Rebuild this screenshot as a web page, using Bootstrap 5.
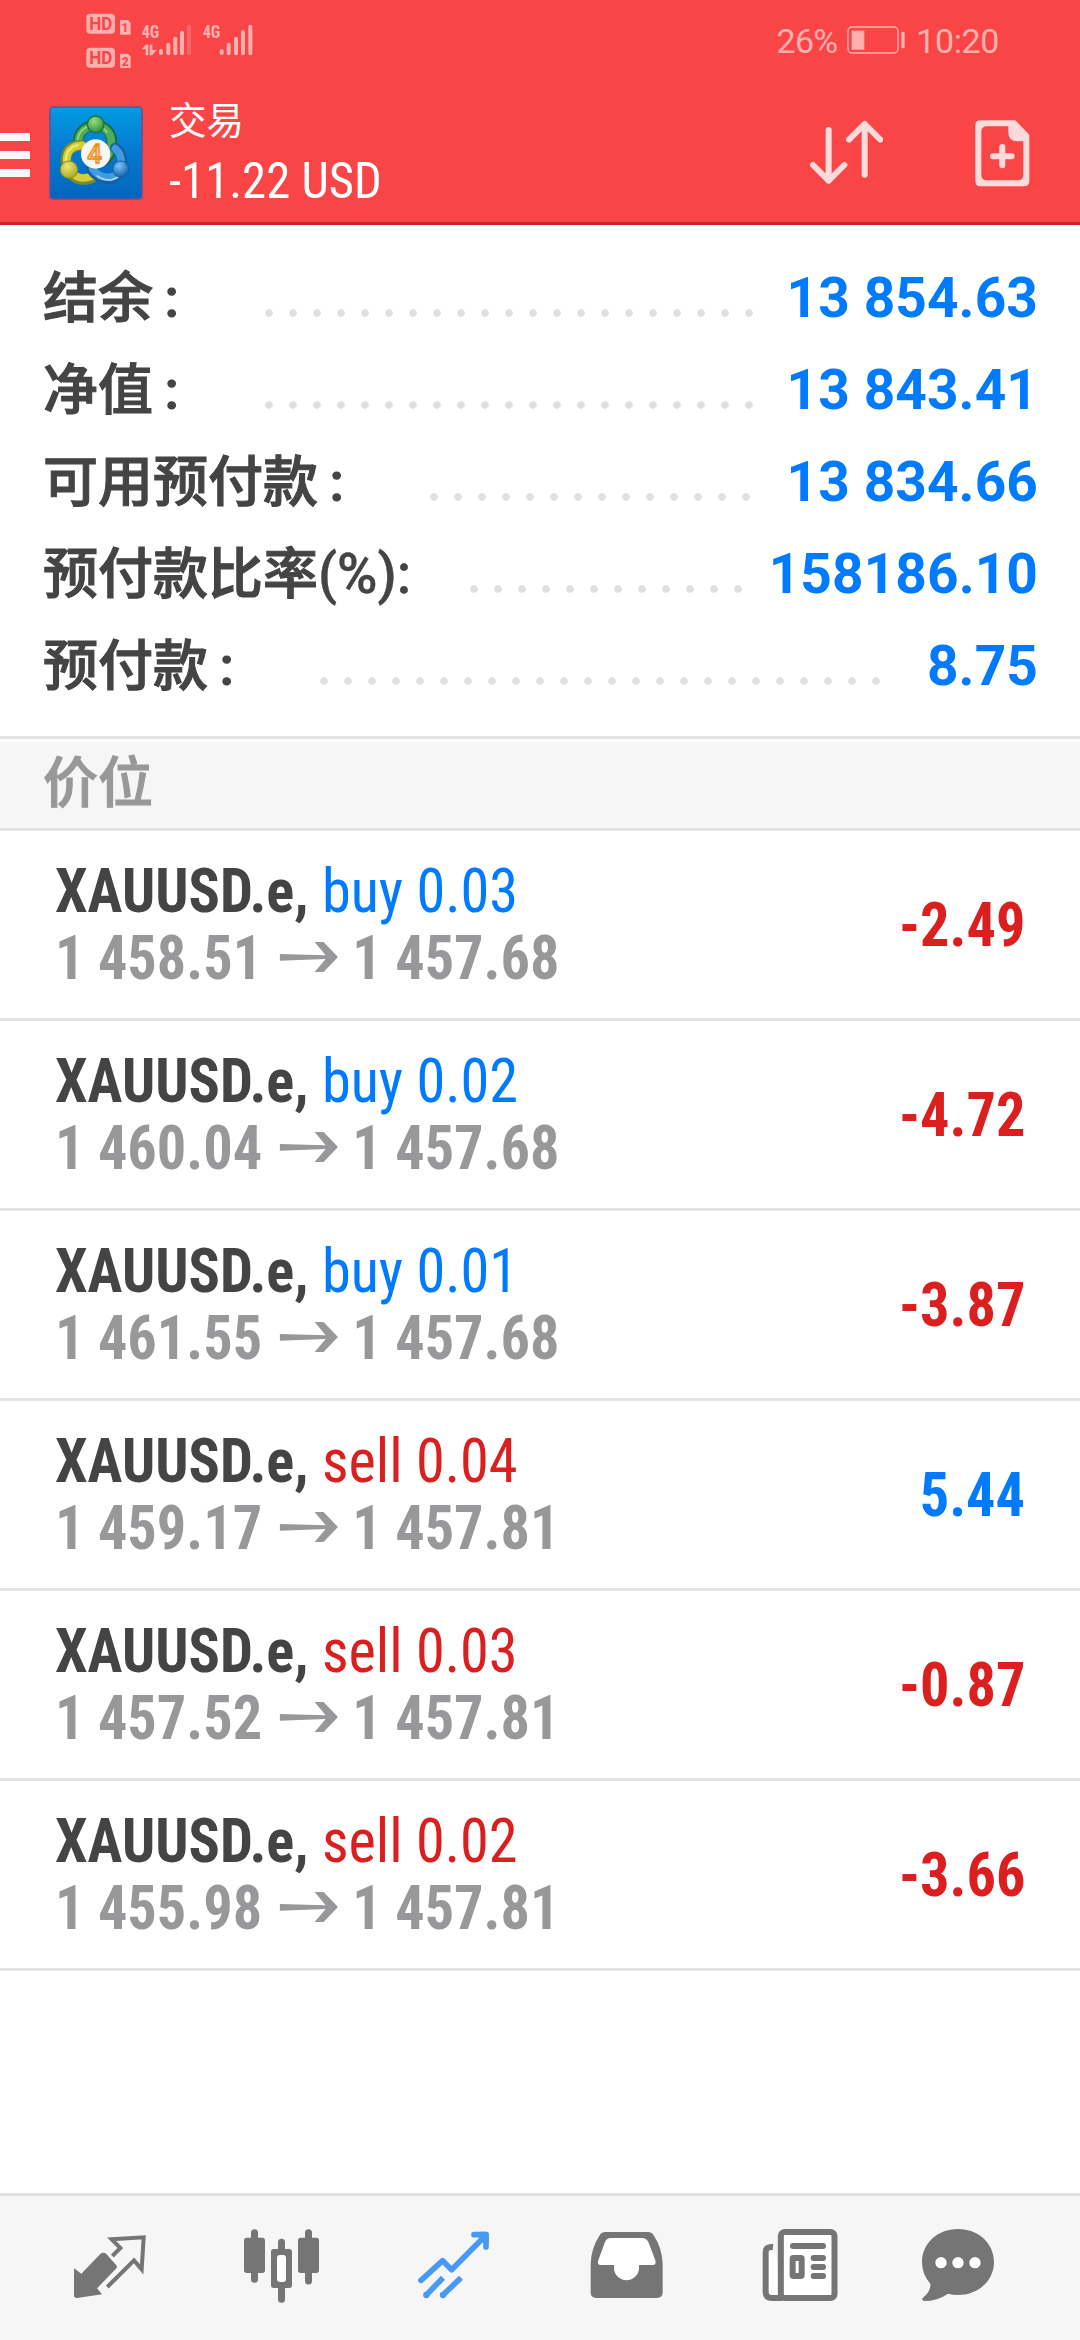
<!DOCTYPE html>
<html lang="zh-CN">
<head>
<meta charset="utf-8">
<meta name="viewport" content="width=device-width, initial-scale=1">
<title>交易</title>
<link href="https://cdn.jsdelivr.net/npm/bootstrap@5.3.0/dist/css/bootstrap.min.css" rel="stylesheet">
<style>
  :root { --up:#007aff; --down:#db1f1f; --ink:#444; --muted:#98989b; --rule:#e3e3e4; }
  body { font-family:Roboto,"Noto Sans CJK SC",sans-serif; height:2340px; background:#fff; overflow:hidden; }
  svg { display:block; flex:none; }
  .cond { font-family:"Roboto Condensed","Noto Sans CJK SC",sans-serif; white-space:pre; }
  .app-head { background:#fa4547; height:225px; border-bottom:3px solid #c72329; color:#fff; }
  .status { height:80px; color:#fdb0ae; font-size:34px; line-height:40px; padding:21px 81px 0 84px; }
  .status .clock { letter-spacing:-.4px; }
  .titles { margin-left:26px; padding-top:15px; }
  .app-title { font-family:"Noto Sans CJK SC",sans-serif; font-size:37.5px; line-height:46px; font-weight:400; }
  .app-total { font-size:50px; line-height:60px; margin-top:10px; transform:scaleX(.975); transform-origin:left; }
  .summary { height:511px; padding:27px 42px 0 43px; }
  .sum-row { height:92px; font-size:55px; line-height:92px; color:var(--ink); }
  .sum-label { width:var(--start); font-family:"Noto Sans CJK SC",sans-serif; font-weight:500; white-space:nowrap; line-height:82px; -webkit-text-stroke:1.1px currentColor; }
  .sum-label .pct { font-family:Roboto,sans-serif; font-weight:500; -webkit-text-stroke:.4px currentColor; }
  .sum-label .cln { font-family:Roboto,sans-serif; font-weight:700; margin-left:11px; -webkit-text-stroke:0; }
  .leader { width:calc(var(--n)*24px); height:8px; margin-top:57px; background:radial-gradient(circle at 12px 4px,#e0e0e0 3.4px,transparent 4.2px) 0 0/24px 8px repeat-x; }
  .sum-val { font-weight:700; color:var(--up); letter-spacing:.1px; }
  .sect { height:95px; border-top:3px solid var(--rule); border-bottom:3px solid var(--rule); padding-top:3px; }
  .sect div { background:#f6f6f6; height:86px; padding-left:43px; font:500 55px/73px "Noto Sans CJK SC",sans-serif; color:var(--muted); -webkit-text-stroke:1.1px currentColor; }
  .deal { height:190px; border-bottom:3px solid var(--rule); font-size:62px; line-height:67px; padding:0 55px 0 55px; }
  .deal-main { padding-top:26px; transform:scaleX(.94); transform-origin:left; }
  .sym { font-weight:700; color:var(--ink); }
  .prices { font-weight:700; color:var(--muted); }
  .prices svg { margin:18px 15px 0 19px; }
  .up { color:var(--up); } .down { color:var(--down); }
  .pnl { font-weight:700; padding-top:60px; transform:scaleX(.94); transform-origin:right; }
  .tabs { height:147px; background:#f6f6f6; border-top:3px solid #e2e2e3; padding:20px 24px 0; color:#757575; }
  .tabs a { width:172px; color:inherit; }
  .tabs a.on { color:#4799f5; }
</style>
</head>
<body class="d-flex flex-column">
<header class="app-head">
  <div class="status d-flex justify-content-between">
    <svg width="176" height="59" viewBox="252 36 528 177" style="margin-top:-9px" fill="#fdb0ae">
      <rect x="259" y="41" width="86" height="60" rx="12"/><rect x="259" y="143" width="86" height="60" rx="12"/>
      <g font-family="Roboto" font-weight="700" font-size="54" fill="#fa4547"><text x="268" y="91" textLength="69" lengthAdjust="spacingAndGlyphs">HD</text><text x="268" y="193" textLength="69" lengthAdjust="spacingAndGlyphs">HD</text></g>
      <path d="M360 60h24l8 9v35h-32zM360 161h24l8 9v34h-32z"/>
      <g font-family="Roboto" font-weight="700" font-size="38" fill="#fa4547"><text x="364" y="97" textLength="22" lengthAdjust="spacingAndGlyphs">1</text><text x="365" y="197" textLength="21" lengthAdjust="spacingAndGlyphs">2</text></g>
      <g font-family="Roboto Condensed" font-weight="700" font-size="54"><text x="425" y="114" textLength="53" lengthAdjust="spacingAndGlyphs">4G</text><text x="608" y="114" textLength="53" lengthAdjust="spacingAndGlyphs">4G</text></g>
      <path d="M437 134h8v32h-8v-18h-12zM449 134h8v16l13 0-13 16h-8z"/>
      <g stroke="#fdb0ae" stroke-width="12" stroke-linecap="round"><path d="M483 159v-6M505 160v-26M526 160v-44M546 160V98M665 159v-6M686 160v-26M708 160v-44M729 160V96M751 160V80"/><path d="M567 160V80" opacity=".3"/></g>
    </svg>
    <div class="d-flex">
      <span style="letter-spacing:-.8px">26%</span>
      <svg width="58" height="28" viewBox="0 0 174 84" style="margin:5px 11px 0 10px" fill="none" stroke="#fdb0ae"><rect x="3" y="3" width="150" height="78" rx="12" stroke-width="4"/><path d="M14 14h38v57H14z" fill="#fdb0ae" stroke="none"/><path d="M168 22v40" stroke-width="10" stroke-linecap="round"/></svg>
      <span class="clock">10:20</span>
    </div>
  </div>
  <div class="d-flex">
    <svg width="30" height="44" viewBox="0 0 30 44" style="margin-top:53px" fill="#f7f7fd"><path d="M0 0h30v8H0zM0 18h30v8H0zM0 36h30v8H0z"/></svg>
    <svg width="94" height="94" viewBox="147 318 282 282" style="margin:26px 0 0 19px">
      <defs>
        <linearGradient id="sky" x1="0" y1="0" x2="0" y2="1"><stop offset="0" stop-color="#029be2"/><stop offset=".5" stop-color="#0479cf"/><stop offset="1" stop-color="#0465bd"/></linearGradient>
        <radialGradient id="gn" cx=".4" cy=".3" r=".7"><stop offset="0" stop-color="#9fdc7d"/><stop offset="1" stop-color="#2c9443"/></radialGradient>
        <radialGradient id="yl" cx=".4" cy=".3" r=".7"><stop offset="0" stop-color="#eee777"/><stop offset="1" stop-color="#a9ab20"/></radialGradient>
        <radialGradient id="bl" cx=".4" cy=".3" r=".7"><stop offset="0" stop-color="#7cc6f5"/><stop offset="1" stop-color="#1365b3"/></radialGradient>
      </defs>
      <rect x="150" y="321" width="276" height="276" rx="10" fill="url(#sky)" stroke="#5b55a0" stroke-width="5"/>
      <g fill="none" stroke-linecap="round">
        <path d="M236 432c-8-70 98-78 100-6 0 24-8 44-20 54" stroke="#1c6e3c" stroke-width="32"/>
        <path d="M236 428c-4-60 94-72 98-4 0 24-6 40-16 50" stroke="#4fae57" stroke-width="23"/>
        <path d="M233 418c4-40 60-58 88-22" stroke="#9bd68a" stroke-width="5"/>
        <path d="M246 436c-50 0-54 40-42 70 14 32 44 38 70 28" stroke="#7d8a2a" stroke-width="32"/>
        <path d="M246 436c-48 2-52 40-40 68 14 30 42 34 66 26" stroke="#d6cd3b" stroke-width="23"/>
        <path d="M234 435c-34 8-40 36-34 58" stroke="#f5ef8e" stroke-width="5"/>
        <path d="M346 444c30 22 28 86-18 92-24 0-44-12-54-28" stroke="#1c5c9e" stroke-width="32"/>
        <path d="M346 446c26 20 26 80-18 86-24 0-40-10-50-26" stroke="#3f9ce0" stroke-width="23"/>
        <path d="M292 528c30 22 68 12 80-22" stroke="#a2d7f8" stroke-width="5"/>
      </g>
      <circle cx="287" cy="373" r="25" fill="url(#gn)" stroke="#1d7338" stroke-width="4"/>
      <circle cx="207" cy="509" r="26" fill="url(#yl)" stroke="#878b1e" stroke-width="3"/>
      <circle cx="362" cy="507" r="24" fill="url(#bl)" stroke="#175c9f" stroke-width="3"/>
      <circle cx="287" cy="462" r="44" fill="#f7f6f6"/>
      <text x="262" y="489" font-family="Roboto" font-size="78" font-weight="500" fill="#fbd27e" stroke="#e98d24" stroke-width="4">4</text>
    </svg>
    <div class="titles">
      <div class="app-title">交易</div>
      <div class="app-total cond">-11.22 USD</div>
    </div>
    <svg class="ms-auto" width="74" height="66" viewBox="205 360 222 198" style="margin:40px 92px 0 0" fill="none" stroke="#fedada" stroke-width="18" stroke-linecap="round" stroke-linejoin="round"><path d="M264 390v152M217 495l47 47 47-47M372 524V372M325 419l47-47 47 47"/></svg>
    <svg width="55" height="67" viewBox="704 359 165 201" style="margin:40px 50px 0 0" fill="#fedada"><path fill-rule="evenodd" d="M720 360h105l42 43v139q0 16-16 16H720q-15 0-15-16V376q0-16 15-16zM740 378q-17 0-17 17v128q0 17 17 17h92q17 0 17-17V423h-18q-27 0-27-27v-18z"/><path d="M786 440v55M758 468h56" stroke="#fedada" stroke-width="18" stroke-linecap="round"/></svg>
  </div>
</header>
<main class="flex-grow-1">
  <section class="summary">
    <div class="sum-row d-flex" style="--start:214px;--n:21"><div class="sum-label">结余<span class="cln">:</span></div><div class="leader"></div><div class="sum-val ms-auto">13 854.63</div></div>
    <div class="sum-row d-flex" style="--start:214px;--n:21"><div class="sum-label">净值<span class="cln">:</span></div><div class="leader"></div><div class="sum-val ms-auto">13 843.41</div></div>
    <div class="sum-row d-flex" style="--start:379px;--n:14"><div class="sum-label">可用预付款<span class="cln">:</span></div><div class="leader"></div><div class="sum-val ms-auto">13 834.66</div></div>
    <div class="sum-row d-flex" style="--start:419px;--n:12"><div class="sum-label">预付款比率<span class="pct">(%):</span></div><div class="leader"></div><div class="sum-val ms-auto">158186.10</div></div>
    <div class="sum-row d-flex" style="--start:269px;--n:24"><div class="sum-label">预付款<span class="cln">:</span></div><div class="leader"></div><div class="sum-val ms-auto">8.75</div></div>
  </section>
  <div class="sect"><div>价位</div></div>
  <section id="deals"></section>
</main>
<nav class="tabs d-flex">
  <a class="d-flex justify-content-center" href="#"><svg width="120" height="100" viewBox="-30 78 360 300" fill="currentColor"><path d="M130 188q-5 0-9 4L64 251l-22-16v80q0 10 10 9l74-11-15-18 57-59q5-5 1-10l-30-34q-4-4-9-4z"/><path d="M157 198l24-24-26-26 96-6-6 96-23-27-80 80" fill="none" stroke="currentColor" stroke-width="12"/></svg></a>
  <a class="d-flex justify-content-center" href="#"><svg width="120" height="100" viewBox="486 78 360 300" fill="currentColor"><rect x="552" y="143" width="63" height="106" rx="8"/><rect x="714" y="143" width="63" height="106" rx="8"/><rect x="633" y="177" width="63" height="117" rx="8"/><path d="M583.500 128v140M745.500 128v145M664.500 157v30M664.500 290v38" stroke="currentColor" stroke-width="21" stroke-linecap="round"/><rect x="651" y="195" width="27" height="81" rx="9" fill="#fff"/></svg></a>
  <a class="d-flex justify-content-center on" href="#"><svg width="120" height="100" viewBox="1002 78 360 300" fill="none" stroke="currentColor" stroke-width="17"><g stroke-linecap="round" stroke-linejoin="round"><path d="M1083 271l65-59 27 27 103-104M1242 134h36v37"/><path d="M1262 134h16v20z"/></g><path d="M1099 315l50-52M1149 315l54-52"/><g fill="currentColor" stroke="none"><circle cx="1099" cy="315" r="9.500"/><circle cx="1149" cy="315" r="9.500"/></g></svg></a>
  <a class="d-flex justify-content-center" href="#"><svg width="120" height="100" viewBox="-12 78 360 300"><path fill="currentColor" d="M106 126h128q11 0 17 10 25 38 27 85v86q0 17-17 17H79q-17 0-17-17v-86q2-47 27-85 6-10 17-10z"/><path fill="#fff" d="M123 144h92q14 0 20 12l21 55q4 14-8 14h-41v8a37 37 0 0 1-75 0v-8H92q-12 0-7-14l20-55q5-12 18-12z"/></svg></a>
  <a class="d-flex justify-content-center" href="#"><svg width="120" height="100" viewBox="504 78 360 300" fill="none" stroke="currentColor" stroke-width="18"><path d="M609 170q-22-2-22 16v118q0 20 20 20h40" fill="#fff" stroke="none"/><rect x="632.500" y="126" width="161" height="198" rx="12" fill="#fff"/><path d="M609 171q-22-2-22 16v118q0 19 20 19h30"/><path d="M669 168h90M731 204h28M731 231h28M731 258h28" stroke-linecap="round"/><rect x="668" y="204" width="27" height="54" rx="2" fill="#fff"/></svg></a>
  <a class="d-flex justify-content-center" href="#"><svg width="120" height="100" viewBox="1020 78 360 300" fill="currentColor"><path d="M1164 117c62 0 108 44 108 99s-46 99-108 99q-16 0-30-4-32 22-71 22-10-2-5-9 25-19 23-43-25-28-25-65c0-55 46-99 108-99z"/><g fill="#fff"><circle cx="1113" cy="218" r="17"/><circle cx="1164" cy="218" r="17"/><circle cx="1215" cy="218" r="17"/></g></svg></a>
</nav>
<script src="https://cdn.jsdelivr.net/npm/bootstrap@5.3.0/dist/js/bootstrap.bundle.min.js"></script>
<script>
  const deals = [
    ["buy 0.03", "1 458.51", "1 457.68", "-2.49"],
    ["buy 0.02", "1 460.04", "1 457.68", "-4.72"],
    ["buy 0.01", "1 461.55", "1 457.68", "-3.87"],
    ["sell 0.04", "1 459.17", "1 457.81", "5.44"],
    ["sell 0.03", "1 457.52", "1 457.81", "-0.87"],
    ["sell 0.02", "1 455.98", "1 457.81", "-3.66"]
  ];
  document.getElementById("deals").innerHTML = deals.map(([side, open, now, pnl]) => `
    <div class="deal cond d-flex justify-content-between"><div class="deal-main"><div class="d-flex"><span class="sym">XAUUSD.e, </span><span class="side ${side[0] === "b" ? "up" : "down"}">${side}</span></div><div class="prices d-flex"><span>${open}</span><svg width="62" height="30" viewBox="0 0 175 90" preserveAspectRatio="none" fill="currentColor"><path d="M0 36L138 40 105 0h27l43 45-43 45h-27l33-39L0 56z"/></svg><span>${now}</span></div></div><div class="pnl ${pnl[0] === "-" ? "down" : "up"}">${pnl}</div></div>`).join("");
</script>
</body>
</html>
